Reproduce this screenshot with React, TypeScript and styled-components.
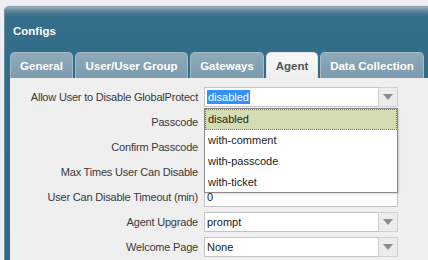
import React from "react";
import styled, { createGlobalStyle } from "styled-components";

const Global = createGlobalStyle`
  html, body { margin: 0; padding: 0; background: #eceef1; overflow: hidden; }
  body { font-family: "Liberation Sans", Arial, sans-serif; }
`;

const Dialog = styled.div`
  margin: 6px 0 0 4px;
  width: 440px;
  height: 260px;
  border-top-left-radius: 5px;
  background: linear-gradient(to bottom, #9ab0be 0px, #6a8ca0 3px, #356e8a 9px, #2f6884 100%);
  border-top: 1px solid #8a9eab;
  border-left: 1px solid #6f8c9d;
  display: flex;
  flex-direction: column;
`;

const Header = styled.div`
  height: 45px;
  display: flex;
  align-items: center;
  padding-left: 8px;
  padding-top: 3px;
  box-sizing: border-box;
  color: #ffffff;
  font-weight: bold;
  font-size: 11.5px;
`;

const TabBar = styled.div`
  display: flex;
  gap: 2px;
  padding-left: 5px;
  height: 26px;
  align-items: flex-end;
`;

const Tab = styled.div<{ $active?: boolean; $w: number }>`
  width: ${(p) => p.$w}px;
  height: 26px;
  box-sizing: border-box;
  border-radius: 5px 5px 0 0;
  display: flex;
  align-items: center;
  justify-content: center;
  font-size: 11.5px;
  font-weight: bold;
  color: ${(p) => (p.$active ? "#4f5559" : "#ffffff")};
  background: ${(p) =>
    p.$active
      ? "linear-gradient(to bottom, #f7f7f7, #efefef)"
      : "linear-gradient(to bottom, #8eaabb, #7c9bad)"};
  border: 1px solid ${(p) => (p.$active ? "#e3e3e3" : "#a3bac8")};
  border-bottom: none;
`;

const Panel = styled.div`
  flex: 1;
  margin-left: 5px;
  background: #efefef;
  position: relative;
  padding-top: 9px;
`;

const Form = styled.div`
  display: grid;
  grid-template-columns: 188px 194px;
  column-gap: 6px;
  row-gap: 5px;
  grid-auto-rows: 20px;
`;

const Label = styled.div`
  font-size: 11px;
  letter-spacing: -0.2px;
  color: #3a3a3a;
  text-align: right;
  display: flex;
  align-items: center;
  justify-content: flex-end;
  white-space: nowrap;
`;

const Input = styled.div`
  box-sizing: border-box;
  height: 20px;
  background: #ffffff;
  border: 1px solid #c4c4c4;
  display: flex;
  align-items: center;
  padding-left: 2px;
  font-size: 11px;
  color: #222;
`;

const Select = styled.div`
  display: flex;
  height: 20px;
`;

const SelectValue = styled(Input)`
  flex: 1;
  border-right: none;
`;

const ArrowBtn = styled.div`
  width: 20px;
  box-sizing: border-box;
  border: 1px solid #d0d0d0;
  background: #ececec;
  display: flex;
  align-items: center;
  justify-content: center;
`;

const Arrow = () => (
  <svg width="10" height="6" viewBox="0 0 10 6">
    <path d="M0 0 L10 0 L5 6 Z" fill="#8c8c8c" />
  </svg>
);

const Selected = styled.span`
  background: #3390ff;
  color: #fff;
  padding: 0 1px;
  line-height: 14px;
`;

const List = styled.div`
  position: absolute;
  left: 194px;
  top: 30px;
  width: 194px;
  height: 85px;
  box-sizing: border-box;
  background: #fff;
  border: 1px solid #8a8a8a;
  box-shadow: 1px 1px 2px rgba(0, 0, 0, 0.15);
  display: flex;
  flex-direction: column;
`;

const Item = styled.div<{ $hl?: boolean }>`
  height: 21px;
  box-sizing: border-box;
  display: flex;
  align-items: center;
  padding-left: 2px;
  font-size: 11px;
  color: #222;
  background: ${(p) => (p.$hl ? "#d5dbb3" : "transparent")};
  border: 1px ${(p) => (p.$hl ? "dotted #7c7f6a" : "solid transparent")};
`;

const Field = ({ children }: { children?: React.ReactNode }) => <Input>{children}</Input>;

const Drop = ({ children }: { children?: React.ReactNode }) => (
  <Select>
    <SelectValue>{children}</SelectValue>
    <ArrowBtn>
      <Arrow />
    </ArrowBtn>
  </Select>
);

export default function App() {
  return (
    <>
      <Global />
      <Dialog>
        <Header>Configs</Header>
        <TabBar>
          <Tab $w={63}>General</Tab>
          <Tab $w={113}>User/User Group</Tab>
          <Tab $w={74}>Gateways</Tab>
          <Tab $w={52} $active>Agent</Tab>
          <Tab $w={104}>Data Collection</Tab>
        </TabBar>
        <Panel>
          <Form>
            <Label>Allow User to Disable GlobalProtect</Label>
            <Drop>
              <Selected>disabled</Selected>
            </Drop>
            <Label>Passcode</Label>
            <Field />
            <Label>Confirm Passcode</Label>
            <Field />
            <Label>Max Times User Can Disable</Label>
            <Field />
            <Label>User Can Disable Timeout (min)</Label>
            <Field>0</Field>
            <Label>Agent Upgrade</Label>
            <Drop>prompt</Drop>
            <Label>Welcome Page</Label>
            <Drop>None</Drop>
          </Form>
          <List>
            <Item $hl>disabled</Item>
            <Item>with-comment</Item>
            <Item>with-passcode</Item>
            <Item>with-ticket</Item>
          </List>
        </Panel>
      </Dialog>
    </>
  );
}
